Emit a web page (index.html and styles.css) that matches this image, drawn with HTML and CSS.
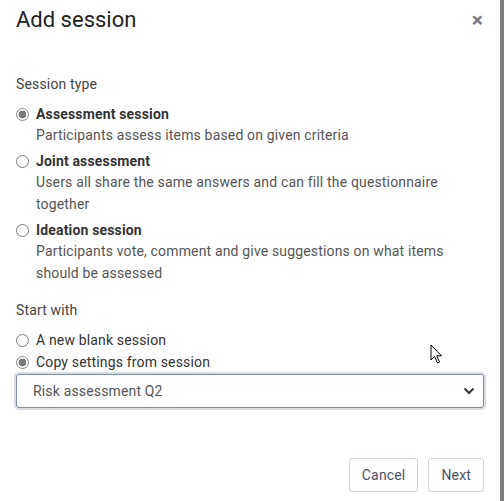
FILE: index.html
```html
<!DOCTYPE html>
<html>
<head>
<meta charset="utf-8">
<link rel="stylesheet" href="styles.css">
</head>
<body>
<div class="modal">
  <div class="header">
    <h1 class="title">Add session</h1>
    <span class="close">×</span>
  </div>
  <div class="content">
    <div class="section-label first">Session type</div>
    <div class="option">
      <input class="radio" type="radio" name="type" checked>
      <div class="opt-label bold">Assessment session</div>
      <div class="opt-desc">Participants assess items based on given criteria</div>
    </div>
    <div class="option">
      <input class="radio" type="radio" name="type">
      <div class="opt-label bold">Joint assessment</div>
      <div class="opt-desc">Users all share the same answers and can fill the questionnaire together</div>
    </div>
    <div class="option">
      <input class="radio" type="radio" name="type">
      <div class="opt-label bold">Ideation session</div>
      <div class="opt-desc">Participants vote, comment and give suggestions on what items should be assessed</div>
    </div>

    <div class="section-label second">Start with</div>
    <div class="option simple">
      <input class="radio" type="radio" name="start">
      <div class="opt-label">A new blank session</div>
    </div>
    <div class="option simple">
      <input class="radio" type="radio" name="start" checked>
      <div class="opt-label">Copy settings from session</div>
    </div>
    <div class="select">
      <span class="select-text">Risk assessment Q2</span>
      <svg class="chev" width="12" height="8" viewBox="0 0 12 8"><path d="M1.5 1.5 L6 6 L10.5 1.5" fill="none" stroke="#333" stroke-width="2"/></svg>
    </div>
  </div>
  <div class="footer">
    <button class="btn">Cancel</button>
    <button class="btn">Next</button>
  </div>
  <svg class="cursor" width="14" height="21" viewBox="0 0 14 21"><path d="M1 1 L1 16 L4.5 12.5 L7.5 19 L9.5 18 L6.8 11.8 L11.5 11.8 Z" fill="#fff" stroke="#000" stroke-width="1" stroke-linejoin="round"/></svg>
</div>
<div class="backdrop"></div>
</body>
</html>
```

FILE: styles.css
```css
* { box-sizing: border-box; }
html, body { margin: 0; padding: 0; }
body {
  display: flex;
  width: 504px;
  height: 501px;
  overflow: hidden;
  font-family: Roboto, "Liberation Sans", sans-serif;
  background: #808080;
}
.modal {
  position: relative;
  width: 500px;
  height: 501px;
  background: #fff;
  display: flex;
  flex-direction: column;
}
.backdrop { flex: 1; background: #7e7e7e; }
.header {
  display: flex;
  align-items: center;
  justify-content: space-between;
  height: 40px;
  padding: 7px 17px 7px 16px;
}
.title {
  margin: 0;
  font-size: 22px;
  line-height: 26px;
  font-weight: 400;
  color: #222;
}
.close {
  font-size: 21px;
  line-height: 24px;
  font-weight: 700;
  color: #7a7a7a;
}
.content {
  padding: 0 16px;
  font-size: 14px;
  letter-spacing: 0.16px;
  color: #444;
}
.section-label { line-height: 20px; color: #444; }
.section-label.first { margin-top: 34px; margin-bottom: 10px; }
.section-label.second { margin-top: 16px; margin-bottom: 10px; }
.option {
  display: grid;
  grid-template-columns: 13px 1fr;
  column-gap: 7px;
  margin-bottom: 5px;
}
.option.simple { margin-bottom: 2px; }
.radio {
  appearance: none;
  -webkit-appearance: none;
  margin: 0;
  width: 13px;
  height: 13px;
  border: 1px solid #7a7a7a;
  border-radius: 50%;
  align-self: center;
  grid-row: 1;
  background: #fff;
}
.radio:checked {
  border-color: #8a8a8a;
  background: radial-gradient(circle, #7b7b7b 0 3.6px, #fff 4.2px);
}
.opt-label { line-height: 20px; color: #333; grid-column: 2; grid-row: 1; }
.opt-label.bold { font-weight: 700; color: #333; }
.opt-desc {
  grid-column: 2;
  line-height: 22px;
  color: #555;
  padding-right: 20px;
}
.select {
  margin-top: 2px;
  height: 34px;
  border: 1px solid #7f89a8;
  border-radius: 3px;
  box-shadow: 0 0 0 2px #d9dce3;
  display: flex;
  align-items: center;
  justify-content: space-between;
  padding: 0 8px 0 16px;
  color: #555;
}
.select-text { line-height: 20px; }
.chev { display: block; }
.footer {
  margin-top: auto;
  display: flex;
  justify-content: flex-end;
  gap: 10px;
  padding: 0 16px 9px 16px;
}
.btn {
  height: 34px;
  padding: 0 12px;
  font-family: Roboto, "Liberation Sans", sans-serif;
  font-size: 14px;
  letter-spacing: 0.16px;
  color: #4b5268;
  background: #fff;
  border: 1px solid #d0d3db;
  border-radius: 3px;
}
.cursor {
  position: absolute;
  left: 430px;
  top: 344px;
}
```
